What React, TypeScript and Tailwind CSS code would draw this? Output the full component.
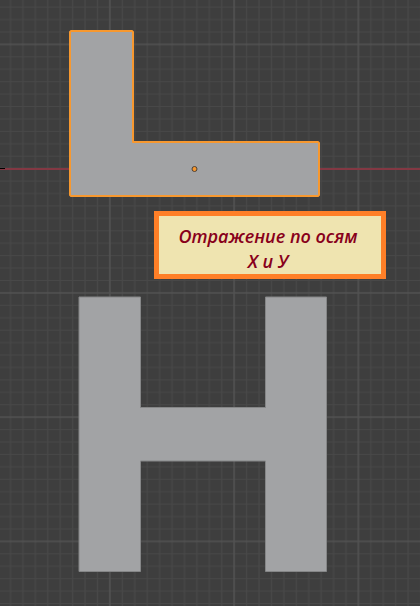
const MINOR = Array.from({ length: 10 }, (_, i) => i * 12.425);

function Viewport() {
  return (
    <svg className="absolute inset-0 h-full w-full" aria-hidden="true">
      <defs>
        <pattern id="grid" x="109.9" y="44.4" width="124.25" height="124.25" patternUnits="userSpaceOnUse">
          {MINOR.slice(1).map((p) => (
            <path key={p} d={`M${p} 0V124.25M0 ${p}H124.25`} stroke="#484848" strokeWidth="1.2" />
          ))}
          <path d="M0 0V124.25M124.25 0V124.25M0 0H124.25M0 124.25H124.25" stroke="#525252" strokeWidth="1.6" />
        </pattern>
      </defs>
      <rect width="100%" height="100%" fill="#3e3e3e" />
      <rect width="100%" height="100%" fill="url(#grid)" />

      {/* X axis */}
      <rect y="168" width="100%" height="2" fill="#833843" />
      <rect y="168" width="5" height="1" fill="#000000" />

      {/* Selected mesh with its origin point */}
      <path
        d="M71 31H132L133 32V142H318L319 143V195L318 196H71L70 195V32Z"
        fill="#a2a3a5"
        stroke="#f7982f"
        strokeWidth="2"
        strokeLinejoin="round"
      />
      <circle cx="194.5" cy="169" r="2.5" fill="#f7982f" stroke="#4a4038" strokeWidth="1" />

      {/* Unselected mesh */}
      <path
        d="M79 297H140.500V407.500H265.500V297H326.500V571.500H265.500V461H140.500V571.500H79Z"
        fill="#a2a3a5"
        stroke="#858687"
        strokeWidth="1"
      />
    </svg>
  );
}

export default function App() {
  return (
    <main className="relative min-h-screen w-full overflow-hidden bg-[#3e3e3e]">
      <Viewport />
      <p className="absolute top-[211px] left-[154px] h-[68px] w-[232px] border-5 border-[#ff7f27] bg-[#efe4b0] pt-2 pr-1 text-center font-['Open_Sans','Noto_Sans',sans-serif] text-[18px] leading-[25px] font-semibold text-[#88001b] italic">
        Отражение по осям
        <br />Х и У
      </p>
    </main>
  );
}
